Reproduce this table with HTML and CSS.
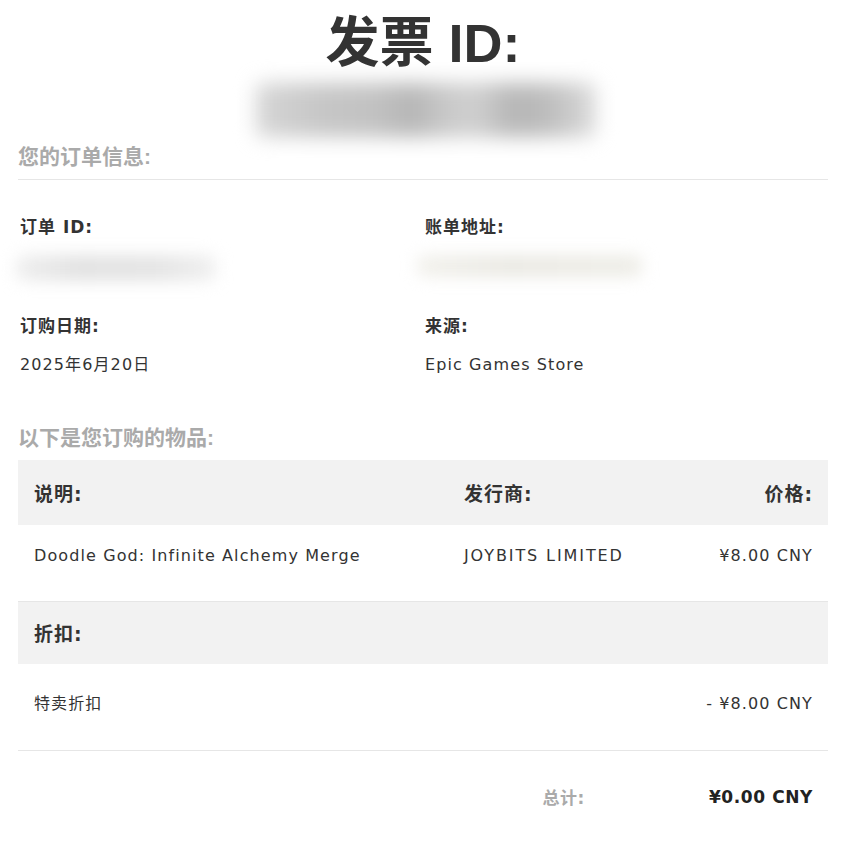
FILE: index.html
```html
<!DOCTYPE html>
<html lang="zh-CN">
<head>
<meta charset="utf-8">
<title>发票</title>
<link rel="stylesheet" href="styles.css">
</head>
<body>
<div class="page">
  <h1 class="title">发票 ID:</h1>
  <div class="blur-wrap"><div class="blur blur-title"></div></div>

  <h2 class="section">您的订单信息:</h2>
  <hr class="rule">

  <div class="info">
    <div class="item">
      <div class="label">订单 ID:</div>
      <div class="value"><div class="blur blur-line blur-order"></div></div>
    </div>
    <div class="item">
      <div class="label">账单地址:</div>
      <div class="value"><div class="blur blur-line blur-addr"></div></div>
    </div>
    <div class="item">
      <div class="label">订购日期:</div>
      <div class="value">2025年6月20日</div>
    </div>
    <div class="item">
      <div class="label">来源:</div>
      <div class="value">Epic Games Store</div>
    </div>
  </div>

  <h2 class="section section-items">以下是您订购的物品:</h2>

  <table class="items">
    <colgroup>
      <col class="c-desc">
      <col class="c-pub">
      <col class="c-price">
    </colgroup>
    <tr class="head">
      <th>说明:</th>
      <th>发行商:</th>
      <th class="right">价格:</th>
    </tr>
    <tr class="row">
      <td>Doodle God: Infinite Alchemy Merge</td>
      <td class="caps">JOYBITS LIMITED</td>
      <td class="right">¥8.00 CNY</td>
    </tr>
    <tr class="head head-disc">
      <th>折扣:</th>
      <th></th>
      <th></th>
    </tr>
    <tr class="row row-last">
      <td>特卖折扣</td>
      <td></td>
      <td class="right">- ¥8.00 CNY</td>
    </tr>
  </table>

  <div class="total">
    <span class="total-label">总计:</span>
    <span class="total-value">¥0.00 CNY</span>
  </div>
</div>
</body>
</html>
```

FILE: styles.css
```css
* { box-sizing: border-box; }

html, body {
  margin: 0;
  padding: 0;
  background: #ffffff;
}

body {
  font-family: "DejaVu Sans", "Noto Sans CJK SC", sans-serif;
  color: #333333;
  font-size: 16px;
}

.page {
  width: 810px;
  margin-left: 18px;
  padding-top: 12px;
  padding-bottom: 40px;
}

.title {
  margin: 0;
  text-align: center;
  font-family: "Liberation Sans", "Noto Sans CJK SC", sans-serif;
  font-size: 54px;
  line-height: 62px;
  font-weight: 700;
  color: #333333;
}

.blur-wrap {
  display: flex;
  justify-content: center;
  margin-top: 1px;
  height: 68px;
}

.blur {
  border-radius: 8px;
}

.blur-title {
  width: 340px;
  height: 54px;
  margin-top: 8px;
  margin-left: 6px;
  filter: blur(10px);
  background: linear-gradient(90deg, #d6d6d6 0%, #c6c6c6 20%, #c2c2c2 35%, #b6b6b6 46%, #c9c9c9 56%, #d0d0d0 64%, #b6b6b6 76%, #bdbdbd 86%, #dcdcdc 100%);
}

.section {
  margin: 0;
  font-family: "Liberation Sans", "Noto Sans CJK SC", sans-serif;
  font-size: 21px;
  line-height: 28px;
  font-weight: 700;
  color: #aaaaaa;
}

.rule {
  margin: 8px 0 0 0;
  border: 0;
  border-top: 1px solid #e6e6e6;
  height: 0;
}

.info {
  display: grid;
  grid-template-columns: 405px 405px;
  row-gap: 38px;
  margin-top: 36px;
  padding-left: 2px;
}

.label {
  font-weight: 700;
  font-size: 17px;
  line-height: 22px;
  letter-spacing: 1px;
  color: #333333;
}

.value {
  margin-top: 17px;
  font-size: 16px;
  line-height: 22px;
  letter-spacing: 1.1px;
  color: #333333;
  height: 22px;
}

.blur-line {
  height: 26px;
  margin-top: 0px;
  filter: blur(8px);
}

.blur-order {
  width: 200px;
  margin-left: -4px;
  background: linear-gradient(90deg, #efefef 0%, #e2e2e2 30%, #e4e4e4 70%, #f0f0f0 100%);
}

.blur-addr {
  width: 225px;
  margin-left: -8px;
  margin-top: 3px;
  height: 22px;
  background: linear-gradient(90deg, #f2f1ec 0%, #eae9e3 40%, #eeede7 100%);
}

.section-items {
  margin-top: 48px;
}

.items {
  width: 810px;
  margin-top: 8px;
  border-collapse: collapse;
  table-layout: fixed;
}

.c-desc { width: 430px; }
.c-pub { width: 220px; }
.c-price { width: 160px; }

.items th,
.items td {
  padding: 0 15px 0 16px;
  text-align: left;
  white-space: nowrap;
}

.items .right {
  text-align: right;
}

.head th {
  background: #f2f2f2;
  height: 65px;
  font-weight: 700;
  font-size: 19px;
  letter-spacing: 1px;
  color: #333333;
}

.head-disc th {
  height: 63px;
}

.row td {
  height: 76px;
  vertical-align: top;
  padding-top: 20px;
  font-size: 16px;
  line-height: 22px;
  letter-spacing: 1.1px;
  color: #333333;
  border-bottom: 1px solid #e6e6e6;
}

.row td.caps {
  letter-spacing: 1.9px;
}

.row-last td {
  height: 86px;
  padding-top: 29px;
}

.total {
  display: flex;
  justify-content: flex-end;
  align-items: center;
  height: 92px;
  padding-right: 15px;
}

.total-label {
  font-weight: 700;
  font-size: 17px;
  letter-spacing: 0.5px;
  color: #aaaaaa;
  margin-right: 124px;
}

.total-value {
  font-weight: 700;
  font-size: 17px;
  letter-spacing: 0.6px;
  color: #222222;
}
```
